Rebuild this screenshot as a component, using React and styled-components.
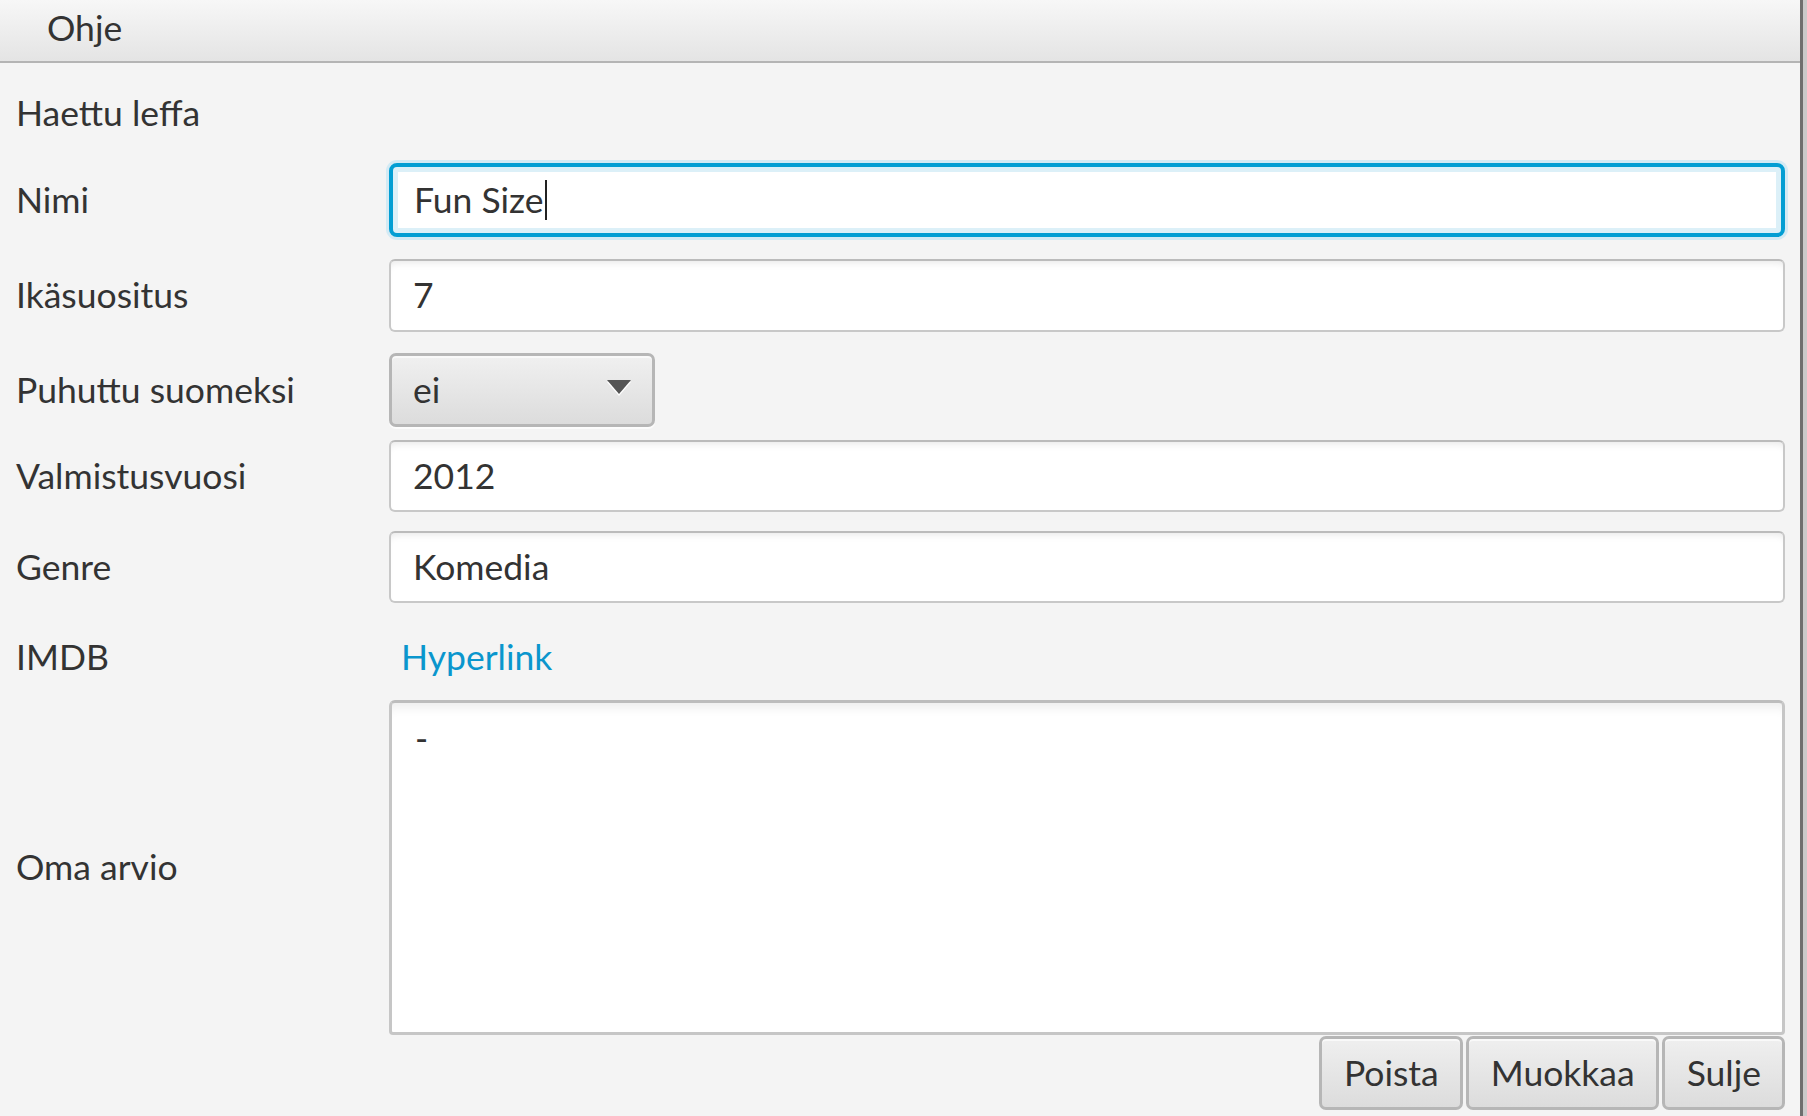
import React from 'react';
import styled, { createGlobalStyle, css } from 'styled-components';

const Global = createGlobalStyle`
  html, body { margin: 0; padding: 0; }
  body {
    background: #f4f4f4;
    font-family: Lato, "Liberation Sans", sans-serif;
    font-size: 35.5px;
    color: #333333;
  }
`;

const Window = styled.div`
  display: flex;
  width: 1807px;
  height: 1116px;
  overflow: hidden;
`;

const Main = styled.div`
  flex: 1;
  display: flex;
  flex-direction: column;
  background: #f4f4f4;
`;

const Edge = styled.div`
  width: 7px;
  background: #c9c9c9;
  border-left: 3px solid #6e6e6e;
  box-sizing: border-box;
`;

const MenuBar = styled.div`
  height: 61px;
  display: flex;
  align-items: center;
  padding-left: 47px;
  background: linear-gradient(#f7f7f7, #e4e4e4);
  border-bottom: 2px solid #b4b4b4;
`;

const MenuItem = styled.span`
  line-height: 1.2;
  margin-top: -4px;
`;

const Form = styled.div`
  display: flex;
  flex-direction: column;
  padding: 0 15px 0 16px;
`;

const Row = styled.div`
  display: grid;
  grid-template-columns: 373px 1fr;
  align-items: center;
  height: ${p => p.$h}px;
  margin-top: ${p => p.$mt}px;
`;

const Label = styled.span`
  line-height: 1.2;
`;

const fieldBase = css`
  box-sizing: border-box;
  height: ${p => p.$h || 73}px;
  border-radius: 6px;
  background: #ffffff;
  border: 2px solid #c8c8c8;
  border-top-color: #bbbbbb;
  box-shadow: inset 0 7px 8px -6px rgba(0, 0, 0, 0.11);
  padding: 0 22px;
  display: flex;
  align-items: center;
  line-height: 1.2;
`;

const Field = styled.div`
  ${fieldBase}
`;

const FocusField = styled.div`
  ${fieldBase}
  height: 74px;
  border: 4px solid #039ed3;
  border-radius: 8px;
  box-shadow: inset 0 0 0 5px #dcf0f8, 0 0 0 3px #d3eaf4;
  padding-left: 21px;
`;

const Caret = styled.span`
  display: inline-block;
  width: 2px;
  height: 40px;
  background: #222;
  margin-left: 1px;
  vertical-align: -9px;
`;

const Combo = styled.div`
  box-sizing: border-box;
  width: 266px;
  height: 74px;
  border-radius: 7px;
  border: 3px solid #b6b6b6;
  background: linear-gradient(#f0f0f0, #dcdcdc);
  box-shadow: inset 0 2px 0 #f9f9f9, 0 2px 1px rgba(255, 255, 255, 0.8);
  display: flex;
  align-items: center;
  justify-content: space-between;
  padding: 0 20px 0 21px;
  line-height: 1.2;
`;

const Arrow = styled.svg`
  display: block;
  margin-top: -4px;
`;

const Link = styled.span`
  color: #0a96cd;
  margin-left: 12px;
  line-height: 1.2;
`;

const TextArea = styled.div`
  box-sizing: border-box;
  height: 100%;
  border-radius: 6px 6px 4px 4px;
  background: #ffffff;
  border: 3px solid #c6c6c6;
  border-top-color: #bdbdbd;
  box-shadow: inset 0 14px 12px -10px rgba(0, 0, 0, 0.08);
  padding: 14px 23px;
  line-height: 1.2;
`;

const Buttons = styled.div`
  display: flex;
  justify-content: flex-end;
  gap: 3px;
  height: 74px;
  margin-top: 1px;
  padding-right: 0;
`;

const Button = styled.div`
  box-sizing: border-box;
  height: 74px;
  display: flex;
  align-items: center;
  padding: 0 21px 0 22px;
  border-radius: 7px;
  border: 3px solid #b6b6b6;
  background: linear-gradient(#efefef, #dcdcdc);
  box-shadow: inset 0 2px 0 #f9f9f9;
  line-height: 1.2;
`;

const plainRows = [
  { label: 'Valmistusvuosi', value: '2012', mt: 13, h: 72 },
  { label: 'Genre', value: 'Komedia', mt: 19, h: 72 },
];

export default function App() {
  return (
    <Window>
      <Global />
      <Main>
        <MenuBar>
          <MenuItem>Ohje</MenuItem>
        </MenuBar>
        <Form>
          <Row $h={66} $mt={17}>
            <Label>Haettu leffa</Label>
          </Row>
          <Row $h={74} $mt={17}>
            <Label>Nimi</Label>
            <FocusField>Fun Size<Caret /></FocusField>
          </Row>
          <Row $h={73} $mt={22}>
            <Label>Ikäsuositus</Label>
            <Field $h={73}>7</Field>
          </Row>
          <Row $h={74} $mt={21}>
            <Label>Puhuttu suomeksi</Label>
            <Combo>
              <span>ei</span>
              <Arrow width="26" height="17" viewBox="0 0 26 17">
                <polygon points="1,2 25,2 13,16" fill="#ffffff" />
                <polygon points="1,0 25,0 13,14" fill="#555555" />
              </Arrow>
            </Combo>
          </Row>
          {plainRows.map(r => (
            <Row key={r.label} $h={r.h} $mt={r.mt}>
              <Label>{r.label}</Label>
              <Field $h={r.h}>{r.value}</Field>
            </Row>
          ))}
          <Row $h={50} $mt={29}>
            <Label>IMDB</Label>
            <Link>Hyperlink</Link>
          </Row>
          <Row $h={335} $mt={18}>
            <Label>Oma arvio</Label>
            <TextArea>-</TextArea>
          </Row>
          <Buttons>
            <Button>Poista</Button>
            <Button>Muokkaa</Button>
            <Button>Sulje</Button>
          </Buttons>
        </Form>
      </Main>
      <Edge />
    </Window>
  );
}
